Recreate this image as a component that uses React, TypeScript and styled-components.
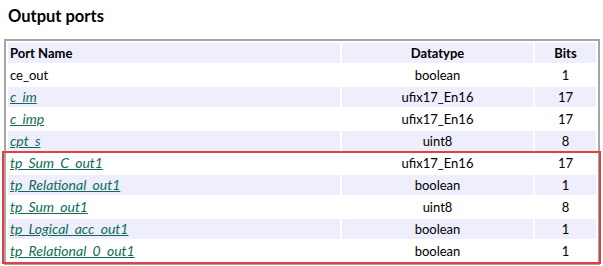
import React from "react";
import styled, { createGlobalStyle } from "styled-components";

const Global = createGlobalStyle`
  html, body { margin: 0; padding: 0; background: #fff; }
  body { font-family: Lato, "Open Sans", sans-serif; color: #000; }
`;

const Page = styled.div`
  position: relative;
  width: 603px;
  height: 266px;
  padding: 5px 0 0 4px;
  box-sizing: border-box;
`;

const Title = styled.h3`
  margin: 0 0 12px 4px;
  font-size: 16.5px;
  font-weight: 700;
  line-height: 22px;
`;

const Table = styled.table`
  width: 596px;
  border: 2px solid #a6a6a6;
  border-spacing: 2px;
  font-size: 13px;
`;

const Row = styled.tr<{ $alt?: boolean }>`
  background: ${(p) => (p.$alt ? "#eeeefc" : "#ffffff")};
  height: 20px;
`;

const Head = styled.th<{ $align?: string }>`
  background: #eeeefc;
  text-align: ${(p) => p.$align || "center"};
  font-weight: 700;
  padding: 0 2px;
  height: 20px;
`;

const Cell = styled.td<{ $align?: string }>`
  text-align: ${(p) => p.$align || "center"};
  padding: 0 2px;
  height: 20px;
  line-height: 20px;
`;

const PortLink = styled.a`
  color: #0f6b56;
  font-style: italic;
  font-size: 14px;
  text-decoration: underline;
`;

const Highlight = styled.div`
  position: absolute;
  left: 2px;
  top: 151px;
  width: 599px;
  height: 113px;
  box-sizing: border-box;
  border: 2px solid #e2403d;
  pointer-events: none;
`;

const rows: { name: string; link: boolean; type: string; bits: string }[] = [
  { name: "ce_out", link: false, type: "boolean", bits: "1" },
  { name: "c_im", link: true, type: "ufix17_En16", bits: "17" },
  { name: "c_imp", link: true, type: "ufix17_En16", bits: "17" },
  { name: "cpt_s", link: true, type: "uint8", bits: "8" },
  { name: "tp_Sum_C_out1", link: true, type: "ufix17_En16", bits: "17" },
  { name: "tp_Relational_out1", link: true, type: "boolean", bits: "1" },
  { name: "tp_Sum_out1", link: true, type: "uint8", bits: "8" },
  { name: "tp_Logical_acc_out1", link: true, type: "boolean", bits: "1" },
  { name: "tp_Relational_0_out1", link: true, type: "boolean", bits: "1" },
];

export default function App() {
  return (
    <Page>
      <Global />
      <Title>Output ports</Title>
      <Table>
        <thead>
          <tr>
            <Head $align="left" style={{ width: 328 }}>Port Name</Head>
            <Head style={{ width: 187 }}>Datatype</Head>
            <Head>Bits</Head>
          </tr>
        </thead>
        <tbody>
          {rows.map((r, i) => (
            <Row key={r.name} $alt={i % 2 === 1}>
              <Cell $align="left">
                {r.link ? <PortLink href="#">{r.name}</PortLink> : r.name}
              </Cell>
              <Cell>{r.type}</Cell>
              <Cell>{r.bits}</Cell>
            </Row>
          ))}
        </tbody>
      </Table>
      <Highlight />
    </Page>
  );
}
